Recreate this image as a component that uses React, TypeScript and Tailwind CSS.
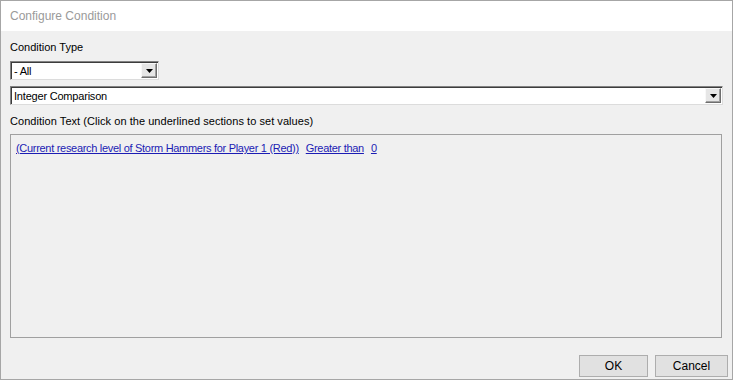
import React from 'react';

function DropArrow() {
    return (
        <div className="flex h-[15px] w-[16px] items-center justify-center bg-[#e6e6e6] border border-[#f8f8f8] border-r-[#6e6e6e] border-b-[#6e6e6e] shadow-[inset_-1px_-1px_0_#a0a0a0]">
            <svg width="7" height="4" viewBox="0 0 7 4"><path d="M0 0H7L3.5 4Z" fill="#000" /></svg>
        </div>
    );
}

function Combo({ value, width }: { value: string; width: string }) {
    return (
        <div className={`${width} flex h-[19px] items-center bg-white border border-[#828282] border-r-[#dcdcdc] border-b-[#dcdcdc] shadow-[inset_1px_1px_0_#3c3c3c]`}>
            <span className="flex-1 pl-[3px] pt-[1px] text-[11px] leading-[14px] tracking-[-0.2px] text-black">{value}</span>
            <div className="pr-[1px]"><DropArrow /></div>
        </div>
    );
}

export default function App() {
    const font = { fontFamily: '"Liberation Sans", Arial, sans-serif' };
    return (
        <div style={font} className="flex h-[380px] w-[733px] flex-col border border-[#a6a6a6] bg-[#f0f0f0]">
            {/* Title bar */}
            <div className="flex h-[30px] items-center bg-white pl-[9px] text-[12px] text-[#9a9a9a]">
                Configure Condition
            </div>

            <div className="flex flex-1 flex-col px-[9px]">
                <div className="mt-[9px] text-[11px] leading-[14px] text-black">Condition Type</div>
                <div className="mt-[7px]"><Combo value="- All" width="w-[149px]" /></div>
                <div className="mt-[6px]"><Combo value="Integer Comparison" width="w-[713px]" /></div>

                <div className="mt-[9px] text-[11px] leading-[14px] tracking-[0.05px] text-black">
                    Condition Text (Click on the underlined sections to set values)
                </div>
                <div className="mt-[6px] h-[204px] w-[712px] border border-[#a0a0a0] bg-[#f0f0f0] pl-[5px] pt-[6px] text-[11px] leading-[14px] tracking-[-0.3px] text-[#1c1cb4]">
                    <span className="underline">(Current research level of Storm Hammers for Player 1 (Red))</span>
                    <span className="ml-[7px] underline">Greater than</span>
                    <span className="ml-[7px] underline">0</span>
                </div>

                <div className="-mr-[5px] mt-[17px] flex justify-end gap-[7px]">
                    <button className="h-[22px] w-[69px] border border-[#adadad] bg-[#e1e1e1] text-[12px] text-black">OK</button>
                    <button className="h-[22px] w-[73px] border border-[#adadad] bg-[#e1e1e1] text-[12px] text-black">Cancel</button>
                </div>
            </div>
        </div>
    );
}
